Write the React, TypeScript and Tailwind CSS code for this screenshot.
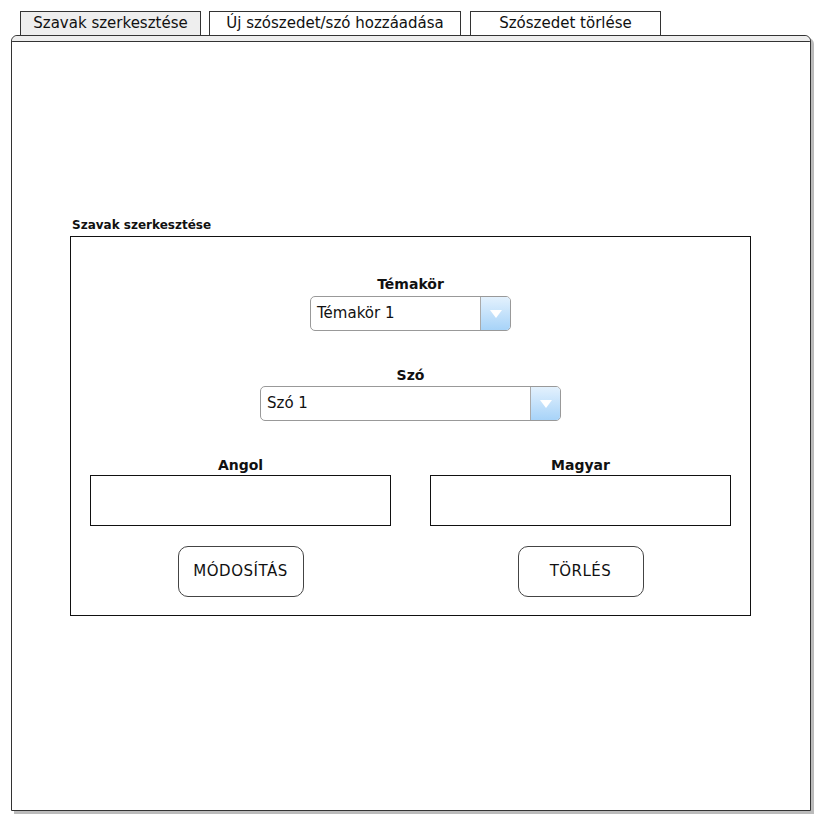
import { ReactNode } from 'react';

const font = "font-['DejaVu_Sans',sans-serif]";

const Tab = ({ label, active, w, className = '' }: { label: string; active?: boolean; w: string; className?: string }) => (
  <div
    className={`${w} h-[24px] border border-[#333] border-b-0 flex items-center justify-center text-[15px] text-[#111] ${
      active ? 'bg-[#eeeeee]' : 'bg-white'
    } ${className}`}
  >
    {label}
  </div>
);

const Label = ({ children }: { children: ReactNode }) => (
  <div className="text-[14px] leading-[16px] font-bold text-[#111] text-center">{children}</div>
);

const Select = ({ value, w }: { value: string; w: string }) => (
  <div className={`${w} h-[35px] border border-[#999] rounded-[5px] flex items-stretch overflow-hidden bg-white`}>
    <div className="flex-1 flex items-center pl-[6px] text-[15px] text-[#111]">{value}</div>
    <div className="w-[30px] border-l border-[#aaa] bg-gradient-to-b from-[#e3f1fd] to-[#a7d3f8] flex items-center justify-center">
      <svg width="14" height="10" viewBox="0 0 14 10">
        <path d="M1 1 L13 1 L7 9 Z" fill="#ffffff" />
      </svg>
    </div>
  </div>
);

const Btn = ({ label }: { label: string }) => (
  <div className="w-[126px] h-[51px] border border-[#444] rounded-[10px] flex items-center justify-center text-[15px] tracking-[0.5px] text-[#111] bg-white">
    {label}
  </div>
);

const Field = ({ label, action }: { label: string; action: string }) => (
  <div className="w-[301px] flex flex-col items-center">
    <Label>{label}</Label>
    <div className="mt-[2px] w-[301px] h-[51px] border border-[#111] bg-white" />
    <div className="mt-[20px]">
      <Btn label={action} />
    </div>
  </div>
);

export default function App() {
  return (
    <div className={`w-[823px] h-[821px] bg-white ${font}`}>
      <div className="flex pt-[11px] pl-[20px]">
        <Tab label="Szavak szerkesztése" active w="w-[181px]" />
        <Tab label="Új szószedet/szó hozzáadása" w="w-[252px]" className="ml-[8px]" />
        <Tab label="Szószedet törlése" w="w-[191px]" className="ml-[9px]" />
      </div>
      <div className="ml-[11px] w-[800px] h-[776px] border border-[#333] rounded-t-[6px] shadow-[3px_3px_0_#bbbbbb] bg-white flex flex-col">
        <div className="h-[6px] bg-[#eeeeee] border-b border-[#333] rounded-t-[6px]" />
        <div className="pl-[58px] pt-[176px]">
          <div className="text-[12px] leading-[14px] font-bold text-[#111] pl-[2px]">Szavak szerkesztése</div>
          <div className="mt-[4px] w-[681px] h-[380px] border border-[#111] flex flex-col items-center pt-[39px]">
            <Label>Témakör</Label>
            <div className="mt-[4px]">
              <Select value="Témakör 1" w="w-[201px]" />
            </div>
            <div className="mt-[36px]">
              <Label>Szó</Label>
            </div>
            <div className="mt-[3px]">
              <Select value="Szó 1" w="w-[301px]" />
            </div>
            <div className="mt-[36px] w-full flex pl-[19px] gap-[39px]">
              <Field label="Angol" action="MÓDOSÍTÁS" />
              <Field label="Magyar" action="TÖRLÉS" />
            </div>
          </div>
        </div>
      </div>
    </div>
  );
}
